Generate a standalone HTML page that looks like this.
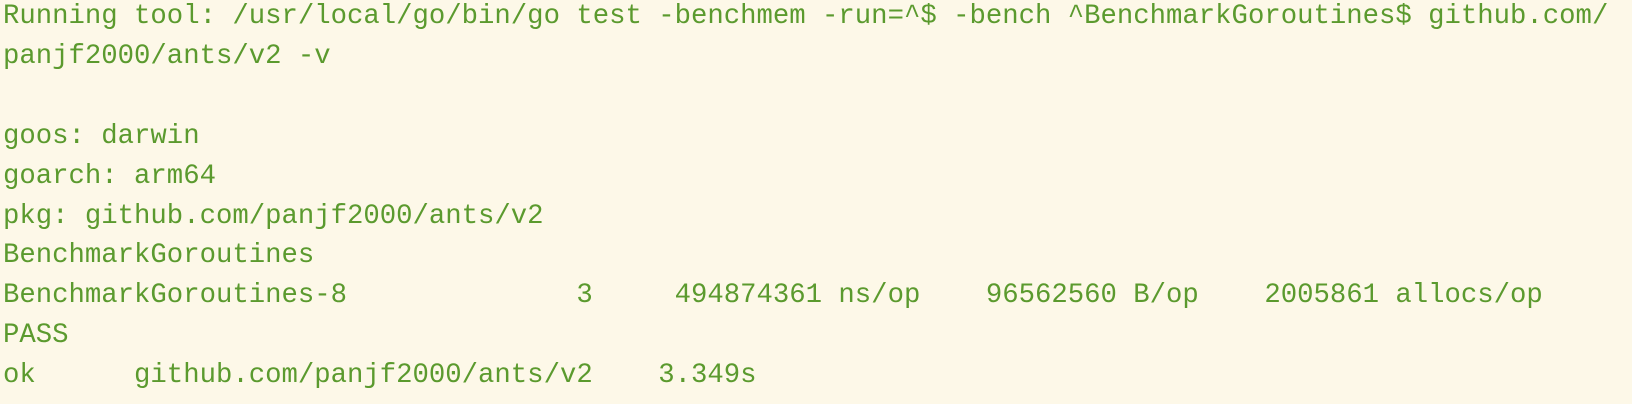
<!DOCTYPE html>
<html><head><meta charset="utf-8"><style>
html,body{margin:0;padding:0;background:#fdf8e8;width:1632px;height:404px;overflow:hidden}
pre{margin:0;position:absolute;left:3px;top:-3px;font-family:"Liberation Mono",monospace;font-size:27.3px;line-height:39.9px;color:#5b9a2e;white-space:pre}
</style></head><body>
<pre>Running tool: /usr/local/go/bin/go test -benchmem -run=^$ -bench ^BenchmarkGoroutines$ github.com/
panjf2000/ants/v2 -v

goos: darwin
goarch: arm64
pkg: github.com/panjf2000/ants/v2
BenchmarkGoroutines
BenchmarkGoroutines-8              3     494874361 ns/op    96562560 B/op    2005861 allocs/op
PASS
ok      github.com/panjf2000/ants/v2    3.349s</pre>
</body></html>
